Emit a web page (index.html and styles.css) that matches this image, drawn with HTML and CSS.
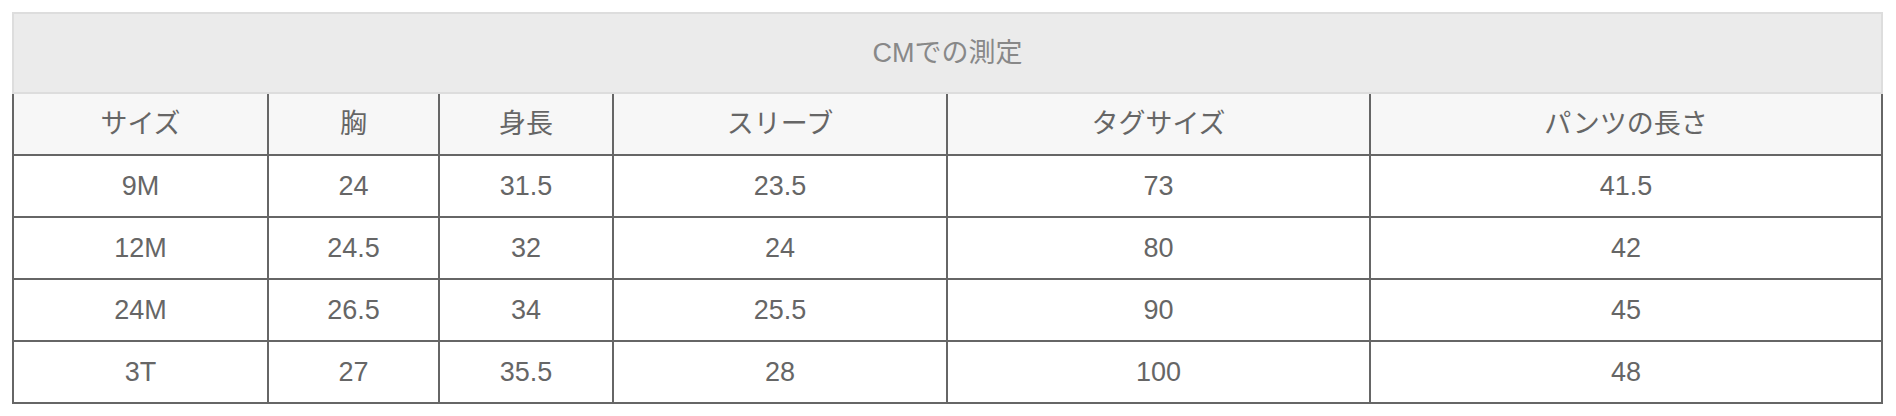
FILE: index.html
```html
<!DOCTYPE html>
<html lang="ja">
<head>
<meta charset="utf-8">
<title>CMでの測定</title>
<link rel="stylesheet" href="styles.css">
</head>
<body>
<table class="size-table">
  <colgroup>
    <col class="c1"><col class="c2"><col class="c3"><col class="c4"><col class="c5"><col class="c6">
  </colgroup>
  <thead>
    <tr class="cap-row"><th class="cap" colspan="6">CMでの測定</th></tr>
    <tr class="head-row">
      <th>サイズ</th><th>胸</th><th>身長</th><th>スリーブ</th><th>タグサイズ</th><th>パンツの長さ</th>
    </tr>
  </thead>
  <tbody>
    <tr><td>9M</td><td>24</td><td>31.5</td><td>23.5</td><td>73</td><td>41.5</td></tr>
    <tr><td>12M</td><td>24.5</td><td>32</td><td>24</td><td>80</td><td>42</td></tr>
    <tr><td>24M</td><td>26.5</td><td>34</td><td>25.5</td><td>90</td><td>45</td></tr>
    <tr><td>3T</td><td>27</td><td>35.5</td><td>28</td><td>100</td><td>48</td></tr>
  </tbody>
</table>
</body>
</html>
```

FILE: styles.css
```css
html, body {
  margin: 0;
  padding: 0;
  background: #fff;
}
body {
  padding: 12px 0 0 12px;
  font-family: "Liberation Sans", "Noto Sans CJK JP", sans-serif;
}
.size-table {
  border-collapse: collapse;
  table-layout: fixed;
  width: 1869px;
  font-size: 27px;
  line-height: 30px;
  color: #666;
}
.c1 { width: 255px; }
.c2 { width: 171px; }
.c3 { width: 174px; }
.c4 { width: 334px; }
.c5 { width: 423px; }
.c6 { width: 512px; }
.size-table th,
.size-table td {
  border: 2px solid #666;
  text-align: center;
  vertical-align: middle;
  padding: 0;
  font-weight: normal;
}
.size-table .cap {
  border: 2px solid #ddd;
  background: #ebebeb;
  color: #888;
  height: 78px;
}
.head-row th {
  background: #f7f7f7;
  height: 60px;
}
.size-table td {
  height: 60px;
}
```
